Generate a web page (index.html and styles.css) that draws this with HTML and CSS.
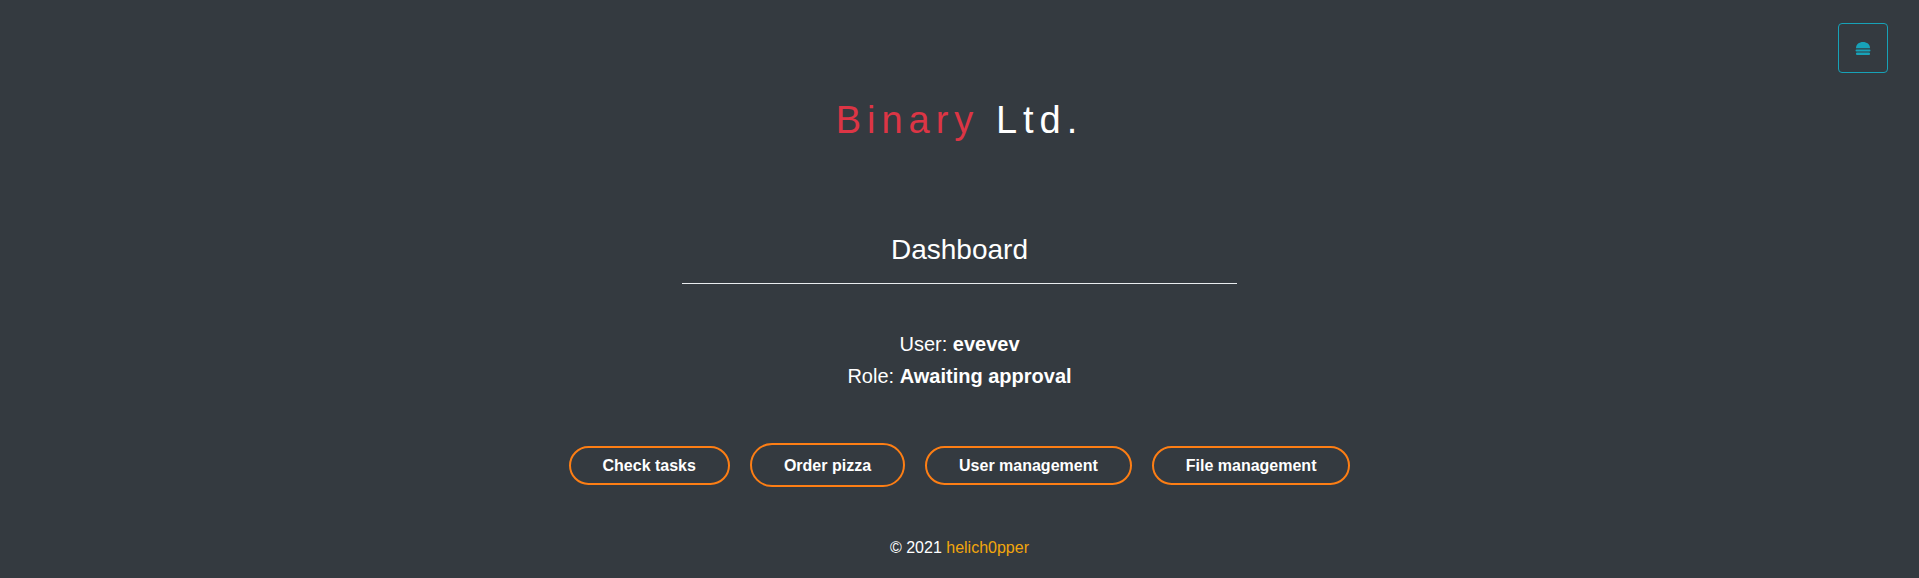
FILE: index.html
```html
<!DOCTYPE html>
<html lang="en">
<head>
<meta charset="utf-8">
<title>Binary Ltd. - Dashboard</title>
<link rel="stylesheet" href="styles.css">
</head>
<body>
<header class="topbar">
  <button class="menu-toggle" type="button" aria-label="Menu">
    <svg class="burger" width="16" height="13" viewBox="0 0 16 13" aria-hidden="true">
      <path d="M1 6.2 C1 2.2 4.2 0 8 0 C11.8 0 15 2.2 15 6.2 Z" fill="#17a2b8"/>
      <rect x="0.5" y="7.4" width="15" height="2" rx="1" fill="#17a2b8"/>
      <rect x="1" y="10.6" width="14" height="2.4" rx="1" fill="#17a2b8"/>
    </svg>
  </button>
</header>
<main class="content">
  <h1 class="brand"><span class="brand-red">Binary</span> Ltd.</h1>
  <h2 class="section-title">Dashboard</h2>
  <div class="info">
    <div>User: <b>evevev</b></div>
    <div>Role: <b>Awaiting approval</b></div>
  </div>
  <div class="actions">
    <a class="btn" href="#">Check tasks</a>
    <a class="btn btn-tall" href="#">Order pizza</a>
    <a class="btn" href="#">User management</a>
    <a class="btn" href="#">File management</a>
  </div>
</main>
<footer class="footer">© 2021 <a class="footer-link" href="#">helich0pper</a></footer>
</body>
</html>
```
FILE: styles.css
```css
html, body {
  margin: 0;
  padding: 0;
}
body {
  background: #343a40;
  color: #ffffff;
  font-family: "Liberation Sans", Arial, sans-serif;
  height: 578px;
  overflow: hidden;
}
.topbar {
  display: flex;
  justify-content: flex-end;
  padding: 23px 31px 0 0;
}
.menu-toggle {
  width: 50px;
  height: 50px;
  box-sizing: border-box;
  border: 1px solid #17a2b8;
  border-radius: 4px;
  background: transparent;
  display: flex;
  align-items: center;
  justify-content: center;
  padding: 0;
}
.burger {
  display: block;
}
.content {
  display: flex;
  flex-direction: column;
  align-items: center;
}
.brand {
  margin: 27px 0 0 0;
  font-size: 38px;
  line-height: 40px;
  font-weight: normal;
  letter-spacing: 6px;
  color: #ffffff;
}
.brand-red {
  color: #dc3545;
}
.section-title {
  margin: 93px 0 0 0;
  width: 555px;
  text-align: center;
  font-size: 28px;
  line-height: 34px;
  font-weight: normal;
  padding-bottom: 16px;
  border-bottom: 1px solid #e9ecef;
}
.info {
  margin-top: 44px;
  font-size: 20px;
  line-height: 32px;
  text-align: center;
}
.actions {
  margin-top: 51px;
  display: flex;
  align-items: center;
  justify-content: center;
  gap: 20px;
  height: 44px;
}
.btn {
  display: block;
  color: #ffffff;
  text-decoration: none;
  font-weight: bold;
  font-size: 16px;
  line-height: 19px;
  padding: 8px 32px;
  border: 2px solid #fd7e14;
  border-radius: 24px;
}
.btn-tall {
  padding-top: 10.5px;
  padding-bottom: 10.5px;
}
.footer {
  margin-top: 49px;
  text-align: center;
  font-size: 16px;
  line-height: 24px;
}
.footer-link {
  color: #f2a60c;
  text-decoration: none;
}
```
